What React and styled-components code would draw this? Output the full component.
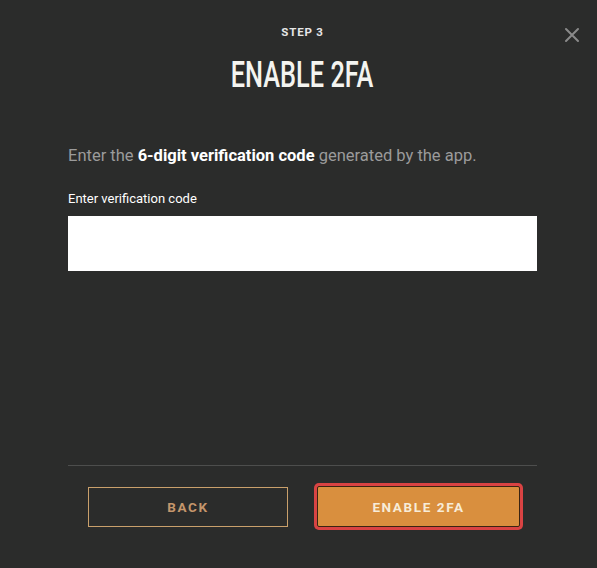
import React from "react";
import styled, { createGlobalStyle } from "styled-components";

const Global = createGlobalStyle`
  html, body { margin: 0; padding: 0; background: #2b2c2b; }
  body { font-family: Roboto, "Noto Sans", sans-serif; }
  * { box-sizing: border-box; }
`;

const Modal = styled.div`
  position: relative;
  width: 597px;
  height: 568px;
  background: #2b2c2b;
  padding: 25px 60px 0 68px;
  display: flex;
  flex-direction: column;
`;

const Close = styled.button`
  position: absolute;
  top: 27px;
  right: 17px;
  width: 16px;
  height: 16px;
  padding: 0;
  border: none;
  background: transparent;
  cursor: pointer;
`;

const Step = styled.div`
  text-align: center;
  font-size: 11.5px;
  font-weight: 700;
  letter-spacing: 0.8px;
  color: #e6e6e6;
  line-height: 14px;
`;

const TitleWrap = styled.div`
  display: flex;
  justify-content: center;
  margin-top: 18px;
  height: 36px;
`;

const Title = styled.h1`
  margin: 0;
  font-size: 37px;
  line-height: 36px;
  font-weight: 500;
  color: #f4f4f0;
  transform: scaleX(0.685);
  white-space: nowrap;
`;

const Lead = styled.p`
  margin: 53px 0 0;
  font-size: 16.5px;
  line-height: 20px;
  color: #9b9b9b;
  b { color: #ffffff; font-weight: 700; }
`;

const Label = styled.label`
  display: block;
  margin-top: 25px;
  font-size: 13px;
  line-height: 15px;
  color: #ffffff;
`;

const Input = styled.input`
  display: block;
  margin-top: 10px;
  width: 469px;
  height: 55px;
  border: none;
  outline: none;
  background: #ffffff;
  padding: 0 12px;
  font-size: 15px;
`;

const Divider = styled.hr`
  margin: 194px 0 0;
  width: 469px;
  border: none;
  border-top: 1px solid #4d4e4d;
`;

const Footer = styled.div`
  display: flex;
  align-items: center;
  gap: 29px;
  padding-left: 20px;
  margin-top: 20px;
`;

const Button = styled.button`
  width: ${(p) => (p.$primary ? "203px" : "200px")};
  height: ${(p) => (p.$primary ? "41px" : "40px")};
  font-family: Roboto, sans-serif;
  font-weight: 700;
  font-size: 13.5px;
  letter-spacing: 1.6px;
  cursor: pointer;
  background: ${(p) => (p.$primary ? "#d98f3e" : "transparent")};
  color: ${(p) => (p.$primary ? "#f7ecd8" : "#c4966b")};
  border: 1px solid ${(p) => (p.$primary ? "#3a2412" : "#c9a06b")};
  border-radius: ${(p) => (p.$primary ? "2px" : "0")};
  box-shadow: ${(p) => (p.$primary ? "0 0 0 3px #d94343" : "none")};
`;

export default function App() {
  return (
    <>
      <Global />
      <Modal>
        <Close aria-label="Close">
          <svg width="16" height="16" viewBox="0 0 16 16">
            <path d="M2 2 L14 14 M14 2 L2 14" stroke="#8a8a8a" strokeWidth="2" strokeLinecap="round" />
          </svg>
        </Close>
        <Step>STEP 3</Step>
        <TitleWrap>
          <Title>ENABLE 2FA</Title>
        </TitleWrap>
        <Lead>
          Enter the <b>6-digit verification code</b> generated by the app.
        </Lead>
        <Label htmlFor="code">Enter verification code</Label>
        <Input id="code" />
        <Divider />
        <Footer>
          <Button>BACK</Button>
          <Button $primary>ENABLE 2FA</Button>
        </Footer>
      </Modal>
    </>
  );
}
